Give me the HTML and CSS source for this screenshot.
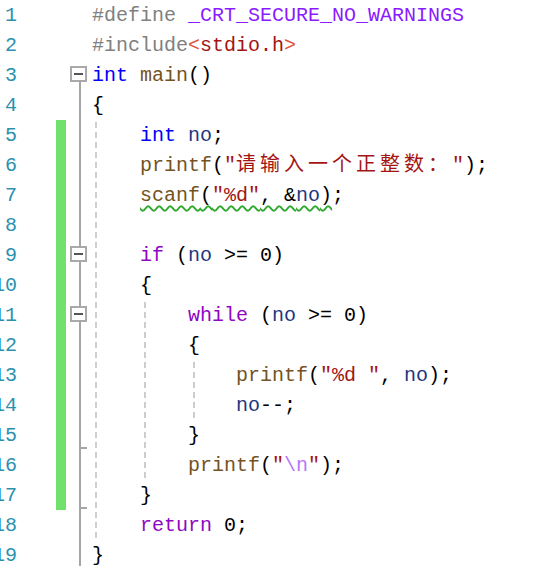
FILE: index.html
```html
<!DOCTYPE html>
<html lang="zh">
<head>
<meta charset="utf-8">
<title>main.c</title>
<link rel="stylesheet" href="styles.css">
</head>
<body>
<div class="editor">
  <div class="row"><span class="ln">1</span><span class="bar"></span><span class="fold"></span><code class="code"><span class="pp">#define</span> <span class="mac">_CRT_SECURE_NO_WARNINGS</span></code></div>
  <div class="row"><span class="ln">2</span><span class="bar"></span><span class="fold"></span><code class="code"><span class="pp">#include</span><span class="ang">&lt;</span><span class="str">stdio.h</span><span class="ang">&gt;</span></code></div>
  <div class="row"><span class="ln">3</span><span class="bar"></span><span class="fold f-start"><span class="box"></span></span><code class="code"><span class="kw">int</span> <span class="fn">main</span>()</code></div>
  <div class="row"><span class="ln">4</span><span class="bar"></span><span class="fold f-line"></span><code class="code">{</code></div>
  <div class="row"><span class="ln">5</span><span class="bar on"></span><span class="fold f-line"></span><code class="code g1">    <span class="kw">int</span> <span class="var">no</span>;</code></div>
  <div class="row"><span class="ln">6</span><span class="bar on"></span><span class="fold f-line"></span><code class="code g1">    <span class="fn">printf</span>(<span class="str">"<span class="cjk">请输入一个正整数：</span>"</span>);</code></div>
  <div class="row"><span class="ln">7</span><span class="bar on"></span><span class="fold f-line"></span><code class="code g1">    <span class="squig"><span class="fn">scanf</span>(<span class="str">"%d"</span>, &amp;<span class="var">no</span>)</span>;</code></div>
  <div class="row"><span class="ln">8</span><span class="bar on"></span><span class="fold f-line"></span><code class="code g1"> </code></div>
  <div class="row"><span class="ln">9</span><span class="bar on"></span><span class="fold f-line"><span class="box"></span></span><code class="code g1">    <span class="ctl">if</span> (<span class="var">no</span> &gt;= 0)</code></div>
  <div class="row"><span class="ln">10</span><span class="bar on"></span><span class="fold f-line"></span><code class="code g1">    {</code></div>
  <div class="row"><span class="ln">11</span><span class="bar on"></span><span class="fold f-line"><span class="box"></span></span><code class="code g1 g2">        <span class="ctl">while</span> (<span class="var">no</span> &gt;= 0)</code></div>
  <div class="row"><span class="ln">12</span><span class="bar on"></span><span class="fold f-line"></span><code class="code g1 g2">        {</code></div>
  <div class="row"><span class="ln">13</span><span class="bar on"></span><span class="fold f-line"></span><code class="code g1 g2 g3">            <span class="fn">printf</span>(<span class="str">"%d "</span>, <span class="var">no</span>);</code></div>
  <div class="row"><span class="ln">14</span><span class="bar on"></span><span class="fold f-line"></span><code class="code g1 g2 g3">            <span class="var">no</span>--;</code></div>
  <div class="row"><span class="ln">15</span><span class="bar on"></span><span class="fold f-end"></span><code class="code g1 g2">        }</code></div>
  <div class="row"><span class="ln">16</span><span class="bar on"></span><span class="fold f-line"></span><code class="code g1 g2">        <span class="fn">printf</span>(<span class="str">"<span class="esc">\n</span>"</span>);</code></div>
  <div class="row"><span class="ln">17</span><span class="bar on"></span><span class="fold f-end"></span><code class="code g1">    }</code></div>
  <div class="row"><span class="ln">18</span><span class="bar"></span><span class="fold f-line"></span><code class="code g1">    <span class="ctl">return</span> 0;</code></div>
  <div class="row"><span class="ln">19</span><span class="bar"></span><span class="fold f-end"></span><code class="code">}</code></div>
</div>
</body>
</html>
```

FILE: styles.css
```css
html, body {
  margin: 0;
  padding: 0;
  background: #ffffff;
  overflow: hidden;
}

.editor {
  margin-left: -7px;
  font-family: "Liberation Mono", "Noto Sans CJK SC", monospace;
  font-size: 20px;
  color: #000000;
}

.row {
  display: flex;
  height: 30px;
  line-height: 28px;
}

.ln {
  width: 24px;
  flex: none;
  box-sizing: border-box;
  padding-top: 2px;
  text-align: right;
  color: #2b91af;
}

.bar {
  width: 10px;
  flex: none;
  margin-left: 39px;
}

.bar.on {
  background: #72e06c;
}

.fold {
  width: 18px;
  flex: none;
  margin-left: 4px;
  display: flex;
  align-items: flex-start;
}

.f-line {
  background: linear-gradient(#a5a5a5, #a5a5a5) 9px 0 / 2px 100% no-repeat;
}

.f-start {
  background: linear-gradient(#a5a5a5, #a5a5a5) 9px 20px / 2px 10px no-repeat;
}

.f-end {
  background:
    linear-gradient(#a5a5a5, #a5a5a5) 9px 27px / 8px 2px no-repeat,
    linear-gradient(#a5a5a5, #a5a5a5) 9px 0 / 2px 100% no-repeat;
}

.box {
  box-sizing: border-box;
  width: 17px;
  height: 16px;
  margin-top: 6px;
  border: 2px solid #a9a9a9;
  background: #ffffff;
  display: flex;
  align-items: center;
  justify-content: center;
}

.box::before {
  content: "";
  width: 9px;
  height: 2px;
  background: #555555;
}

.code {
  flex: 1;
  box-sizing: border-box;
  padding-top: 2px;
  margin-left: 4px;
  font: inherit;
  white-space: pre;
  background-repeat: no-repeat;
}

.g1 {
  background-image: repeating-linear-gradient(to bottom, transparent 0 2px, #cdcdcd 2px 8px, transparent 8px 10px);
  background-position: 3px 0;
  background-size: 2px 100%;
}

.g1.g2 {
  background-image:
    repeating-linear-gradient(to bottom, transparent 0 2px, #cdcdcd 2px 8px, transparent 8px 10px),
    repeating-linear-gradient(to bottom, transparent 0 2px, #cdcdcd 2px 8px, transparent 8px 10px);
  background-position: 3px 0, 52px 0;
  background-size: 2px 100%, 2px 100%;
}

.g1.g2.g3 {
  background-image:
    repeating-linear-gradient(to bottom, transparent 0 2px, #cdcdcd 2px 8px, transparent 8px 10px),
    repeating-linear-gradient(to bottom, transparent 0 2px, #cdcdcd 2px 8px, transparent 8px 10px),
    repeating-linear-gradient(to bottom, transparent 0 2px, #cdcdcd 2px 8px, transparent 8px 10px);
  background-position: 3px 0, 52px 0, 101px 0;
  background-size: 2px 100%, 2px 100%, 2px 100%;
}

.pp { color: #808080; }
.mac { color: #8a1bff; }
.ang { color: #e0553c; }
.str { color: #a31515; }
.kw { color: #0000ff; }
.ctl { color: #8f08c4; }
.fn { color: #74531f; }
.var { color: #1f377f; }
.esc { color: #b776fb; }

.cjk {
  font-family: "Noto Sans CJK SC", sans-serif;
  letter-spacing: 4px;
  line-height: 20px;
}

.squig {
  text-decoration: underline wavy #2ea82e;
  text-decoration-thickness: 1.5px;
  text-underline-offset: 4px;
}
```
